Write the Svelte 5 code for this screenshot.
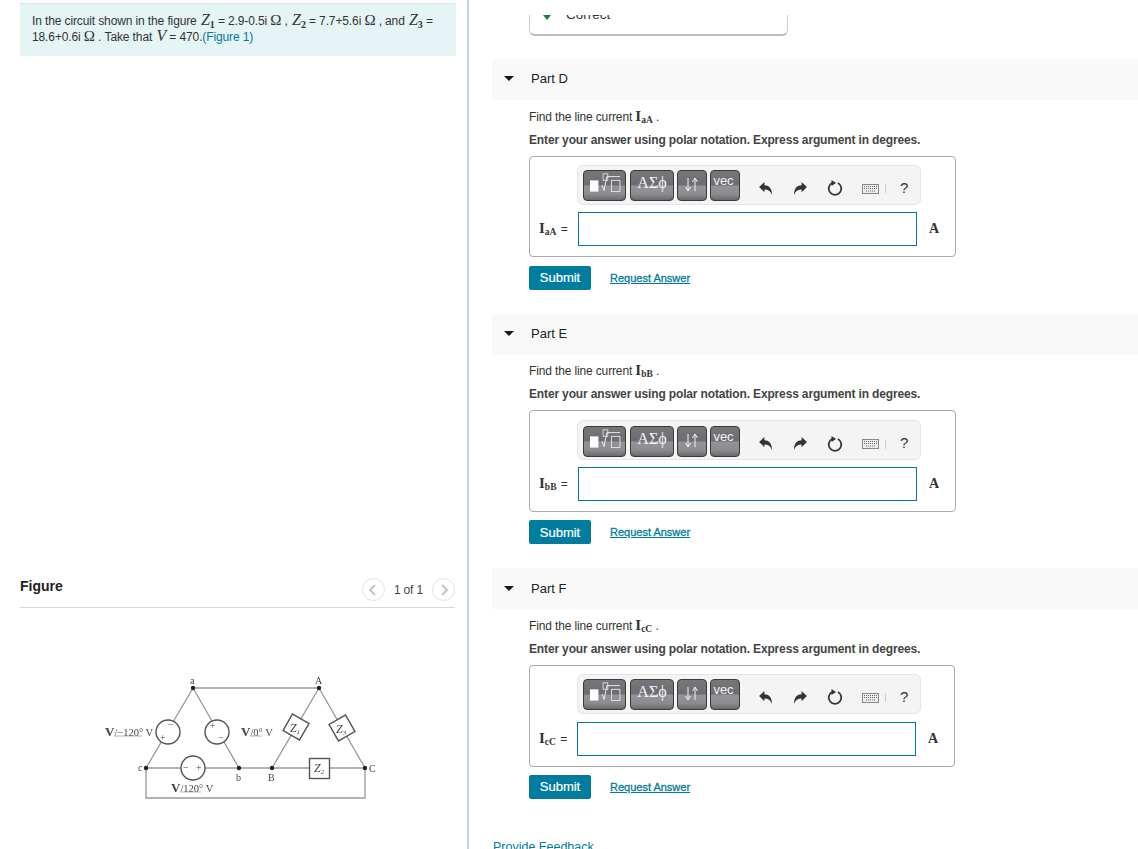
<script>
  const parts = [
    { name: 'Part D', sub: 'aA' },
    { name: 'Part E', sub: 'bB' },
    { name: 'Part F', sub: 'cC' }
  ];
</script>

{#snippet current(sub)}<span class="cur"><b>I</b><sub>{sub}</sub></span>{/snippet}

<div class="page">
  <section class="left">
    <div class="problem">
      <p>In the circuit shown in the figure <i class="m">Z</i><sub class="ms">1</sub> = 2.9-0.5i <span class="o">Ω</span> , <i class="m">Z</i><sub class="ms">2</sub> = 7.7+5.6i <span class="o">Ω</span> , and <i class="m">Z</i><sub class="ms">3</sub> =<br />18.6+0.6i <span class="o">Ω</span> . Take that <i class="m">V</i> = 470.<span class="link">(Figure 1)</span></p>
    </div>
    <div class="fighead">
      <h2>Figure</h2>
      <div class="pager">
        <span class="circ"><svg viewBox="0 0 22 22" width="22" height="22"><path d="M13 6 L8 11 L13 16" /></svg></span>
        <span class="count">1 of 1</span>
        <span class="circ"><svg viewBox="0 0 22 22" width="22" height="22"><path d="M9 6 L14 11 L9 16" /></svg></span>
      </div>
    </div>
    <svg class="diagram" viewBox="0 0 300 135" width="300" height="135">
      <g class="w">
        <path d="M103 18H229M56 98H275M56 98V128H275V98" />
        <path d="M103 18L56 98M103 18L149 98M229 18L182 98M229 18L275 98" />
      </g>
      <g class="e">
        <circle cx="78" cy="62" r="12" />
        <circle cx="127" cy="62" r="12" />
        <circle cx="103" cy="98" r="12" />
        <rect x="196.500" y="47.500" width="19" height="19" transform="rotate(30 206 57)" />
        <rect x="242.500" y="48.500" width="19" height="19" transform="rotate(-30 252 58)" />
        <rect x="219.500" y="88.500" width="20" height="20" />
      </g>
      <g class="d">
        <circle cx="103" cy="18" r="2.200" /><circle cx="229" cy="18" r="2.200" />
        <circle cx="56" cy="98" r="2.200" /><circle cx="149" cy="98" r="2.200" />
        <circle cx="182" cy="98" r="2.200" /><circle cx="275" cy="98" r="2.200" />
      </g>
      <g class="t">
        <text x="100" y="14">a</text><text x="225" y="14">A</text>
        <text x="48" y="101">c</text><text x="146" y="111">b</text>
        <text x="178" y="111">B</text><text x="279" y="102">C</text>
        <text x="70" y="71">+</text><text x="78" y="58">−</text>
        <text x="120" y="59">+</text><text x="128" y="71">−</text>
        <text x="93" y="101">−</text><text x="106" y="101">+</text>
        <text class="z" x="200" y="62">Z<tspan dy="2" font-size="7">1</tspan></text>
        <text class="z" x="246" y="63">Z<tspan dy="2" font-size="7">3</tspan></text>
        <text class="z" x="224" y="102">Z<tspan dy="2" font-size="7">2</tspan></text>
        <text class="v" x="15" y="66"><tspan font-weight="700" font-size="13">V</tspan>/−120° V</text>
        <text class="v" x="151" y="66"><tspan font-weight="700" font-size="13">V</tspan>/0° V</text>
        <text class="v" x="81" y="122"><tspan font-weight="700" font-size="13">V</tspan>/120° V</text>
      </g>
      <path class="u" d="M24 66H52M160 66H172M90 122H111" />
    </svg>
  </section>

  <section class="right">
    <div class="prev">
      <div class="prevline"><span class="tri green"></span><span>Correct</span></div>
    </div>

    {#each parts as p}
      <article class="part">
        <header><span class="tri"></span><h3>{p.name}</h3></header>
        <div class="body">
          <p class="q">Find the line current {@render current(p.sub)} .</p>
          <p class="ins">Enter your answer using polar notation. Express argument in degrees.</p>
          <div class="box">
            <div class="toolbar">
              <button class="b b1" aria-label="templates">
                <svg viewBox="0 0 43 31" width="41" height="29">
                  <rect x="6" y="10" width="9" height="12" fill="#fff" />
                  <rect x="20" y="3" width="5" height="7" fill="none" stroke="#d8d8dc" />
                  <path d="M19 15l2 6 3-15h14" fill="none" stroke="#f0f0f2" />
                  <rect x="29" y="10" width="9" height="12" fill="none" stroke="#e4e4e8" />
                </svg>
              </button>
              <button class="b b2">ΑΣϕ</button>
              <button class="b b3" aria-label="arrows">
                <svg viewBox="0 0 28 29" width="28" height="29"><path d="M10 7V19M7.500 16L10 20L12.500 16M17 20V8M14.500 11L17 7L19.500 11" fill="none" stroke="#f4f4f4" stroke-width="1" /></svg>
              </button>
              <button class="b b4">vec</button>
              <svg class="ic undo" viewBox="0 0 14 14" width="15" height="15"><path d="M1 5.500L6 1V4C10 4 13 6.500 13 13C11.800 9.500 9.500 8 6 8V10.500Z" fill="#333" /></svg>
              <svg class="ic redo" viewBox="0 0 14 14" width="15" height="15"><path d="M13 5.500L8 1V4C4 4 1 6.500 1 13C2.200 9.500 4.500 8 8 8V10.500Z" fill="#333" /></svg>
              <svg class="ic reset" viewBox="0 0 16 16" width="16" height="16"><path d="M5 3A6.300 6.300 0 1 0 11 3" fill="none" stroke="#333" stroke-width="1.800" /><path d="M4.500 0L9 3L4.500 6Z" fill="#333" /></svg>
              <svg class="ic kb" viewBox="0 0 17 10" width="17" height="10"><rect x="0.500" y="0.500" width="16" height="9" fill="#eee" stroke="#888" /><path d="M2 2.500H15M2 4.500H15M4 7H13" stroke="#666" stroke-dasharray="1 1" /></svg>
              <span class="sep"></span>
              <span class="help">?</span>
            </div>
            <div class="row">
              <span class="lab">{@render current(p.sub)} <span class="eq">=</span></span>
              <input type="text" aria-label="answer" />
              <span class="unit">A</span>
            </div>
          </div>
          <div class="actions">
            <button class="submit">Submit</button>
            <span class="req">Request Answer</span>
          </div>
        </div>
      </article>
    {/each}

    <div class="feedback">Provide Feedback</div>
  </section>
</div>

<style>
  :global(body) { margin: 0; background: #fff; }
  .page {
    display: grid;
    grid-template-columns: 467px 1fr;
    width: 1138px;
    height: 849px;
    overflow: hidden;
    font-family: "Liberation Sans", Arial, sans-serif;
    font-size: 12px;
    color: #333;
  }
  p { margin: 0; }
  .left { padding: 3px 11px 0 20px; box-sizing: border-box; border-right: 2px solid #c2d4e3; width: 469px; }
  .problem {
    height: 53px;
    box-sizing: border-box;
    background: #e5f5f6;
    border-top: 1px solid #d8e6ea;
    padding: 9px 12px;
    width: 436px;
    line-height: 16px;
    letter-spacing: -0.12px;
  }
  .m { font: italic 16px/0 "Liberation Serif", serif; letter-spacing: 0; margin-left: 1px; }
  .ms { font-size: 10px; line-height: 0; font-family: "Liberation Serif", serif; font-weight: 700; vertical-align: -3px; }
  .o { font: 15px/0 "Liberation Serif", serif; }
  .link { color: #007c9b; }
  .fighead {
    width: 435px;
    margin-top: 520px;
    height: 31px;
    border-bottom: 1px solid #d8d8d8;
    display: flex;
    justify-content: space-between;
    align-items: flex-start;
  }
  h2 { margin: 1px 0 0; font-size: 14px; line-height: 18px; font-weight: 700; color: #222; }
  .pager { display: flex; align-items: center; gap: 9px; margin-top: 2px; }
  .circ { width: 23px; height: 23px; box-sizing: border-box; border: 1px solid #e2e2e2; border-radius: 50%; display: flex; align-items: center; justify-content: center; }
  .circ svg { flex: none; }
  .circ path { fill: none; stroke: #c4c4c4; stroke-width: 2; }
  .count { color: #444; letter-spacing: -0.15px; }
  .diagram { display: block; margin: 62px 0 0 70px; filter: blur(0.55px); }
  .w path { stroke: #9a9a90; fill: none; stroke-width: 1.300; }
  .e circle, .e rect { fill: #fff; stroke: #55554f; stroke-width: 1.400; }
  .d circle { fill: #222; }
  .t text { font: 10px "Liberation Serif", serif; fill: #444; }
  .t .z { font-style: italic; font-size: 12px; }
  .t .v { font-size: 10.500px; }
  .u { stroke: #999; fill: none; stroke-width: 0.700; }

  .right { padding-left: 24px; margin-left: 1px; width: 646px; }
  .prev {
    margin: 15px 0 23px 37px;
    width: 259px;
    height: 21px;
    box-sizing: border-box;
    border: 1px solid #ccc;
    border-top: 0;
    border-bottom: 2px solid #bbb;
    border-radius: 0 0 6px 6px;
    overflow: hidden;
  }
  .prevline { display: flex; align-items: flex-start; gap: 15px; margin: -7px 0 0 13px; font-size: 13.500px; line-height: 14px; color: #333; }
  .prevline .tri { margin-top: 7px; }
  .part { height: 254.500px; }
  header { display: flex; align-items: center; height: 41px; box-sizing: border-box; padding: 0 0 2px 12px; background: #f9f9f9; }
  .part:nth-of-type(3) header { padding-bottom: 0; }
  h3 { margin: 0 0 0 17px; font-size: 13px; font-weight: 400; color: #222; }
  .tri { width: 0; height: 0; border: 5px solid transparent; border-top: 5px solid #1a1a1a; border-bottom: 0; }
  .tri.green { border-top-color: #1a7f3c; border-left-width: 4.500px; border-right-width: 4.500px; }
  .body { padding-left: 37px; }
  .q { margin-top: 8.500px; height: 16px; line-height: 16px; letter-spacing: -0.14px; }
  .cur { font: 15px/0 "Liberation Serif", serif; color: #333; letter-spacing: 0; }
  .cur b { font-weight: 700; }
  .cur sub { font-size: 9.500px; font-weight: 700; line-height: 0; vertical-align: -2px; }
  .ins { margin-top: 7px; line-height: 16px; font-weight: 700; color: #444; letter-spacing: -0.15px; }
  .box { margin-top: 8px; width: 427px; height: 101px; box-sizing: border-box; border: 1px solid #aaa; border-radius: 4px; }
  .part:nth-of-type(2) .box { height: 102px; }
  .part:nth-of-type(2) .toolbar { margin-top: 9px; }
  .part:nth-of-type(2) .actions { margin-top: 8px; }
  .part:nth-of-type(3) .box { height: 102px; width: 426px; }
  .part:nth-of-type(3) .row { margin-top: 8px; }
  .part:nth-of-type(3) input { margin-left: -1px; }
  .part:nth-of-type(3) .actions { margin-top: 8px; }
  .toolbar {
    margin: 8px 0 0 47px;
    width: 344px;
    height: 40px;
    box-sizing: border-box;
    background: #f4f4f4;
    border: 1px solid #e4e4e4;
    border-radius: 6px;
    display: flex;
    align-items: center;
    padding: 2px 0 0 5px;
  }
  .b {
    height: 31px;
    padding: 0;
    box-sizing: border-box;
    border: 1px solid #3a3a3a;
    border-radius: 4px;
    color: #f4f4f4;
    background: linear-gradient(#77777b 0, #6d6d71 48%, #939398 52%, #8b8b90 80%, #69696d 100%);
    display: flex;
    align-items: flex-start;
    justify-content: center;
    margin-right: 3px;
  }
  .b1 { width: 43px; margin-right: 4px; }
  .b2 { width: 44px; font: 16px/23px "Liberation Serif", serif; }
  .b3 { width: 30px; }
  .b4 { width: 30px; font: 13px/19px "Liberation Sans", sans-serif; margin-right: 0; padding-right: 3px; }
  .ic { flex: none; margin-top: 5px; }
  .undo { margin-left: 18px; }
  .redo { margin-left: 20px; }
  .reset { margin-left: 19px; }
  .kb { margin-left: 19px; margin-top: 6px; }
  .sep { width: 1px; height: 9px; background: #ccc; margin: 6px 0 0 6px; }
  .help { margin: 3px 0 0 14px; font-size: 15px; color: #333; }
  .row { display: flex; align-items: center; margin-top: 7px; height: 34px; }
  .lab { width: 39px; margin-left: 9px; white-space: nowrap; }
  .eq { font: 12px "Liberation Sans", sans-serif; margin-left: 1px; }
  input { width: 339px; height: 34px; box-sizing: border-box; border: 1px solid #007c9b; outline: 0; background: #fff; padding: 0; }
  .unit { margin-left: 12px; font: 700 14px "Liberation Serif", serif; }
  .actions { display: flex; align-items: center; margin-top: 9px; }
  .submit {
    width: 62px;
    height: 24px;
    padding: 0;
    border: 0;
    border-radius: 2px;
    background: #007c9e;
    color: #fff;
    font: 13px "Liberation Sans", sans-serif;
    -webkit-text-stroke: 0.2px #fff;
  }
  .req { margin-left: 19px; color: #007c9b; text-decoration: underline; font-size: 11px; -webkit-text-stroke: 0.3px #007c9b; }
  .feedback { margin-top: 16px; margin-left: 1px; color: #007c9b; font-size: 12.500px; line-height: 16px; }
</style>
